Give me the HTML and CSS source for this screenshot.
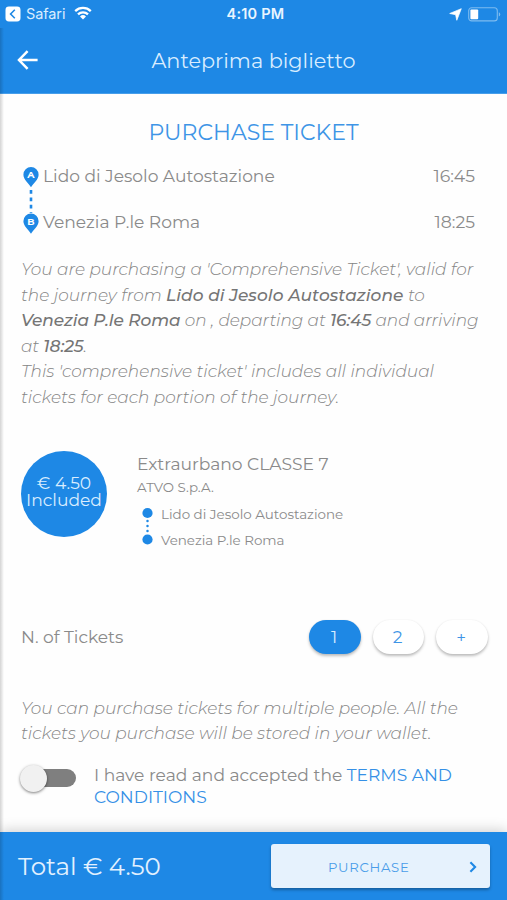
FILE: index.html
```html
<!DOCTYPE html>
<html lang="en">
<head>
<meta charset="utf-8">
<title>Anteprima biglietto</title>
<link rel="stylesheet" href="styles.css">
</head>
<body>
<div class="screen">
  <header class="header">
    <div class="status">
      <div class="status-left">
        <svg width="16" height="16" viewBox="0 0 16 16"><rect x=".5" y=".5" width="15" height="15" rx="3.4" fill="#fff"/><path d="M9.8 3.8 5.600 8l4.200 4.200" fill="none" stroke="#1e88e5" stroke-width="1.600"/></svg>
        <span class="safari">Safari</span>
        <svg class="wifi" width="18" height="14" viewBox="0 0 18 14"><g fill="none" stroke="#fff" stroke-width="2.300"><path d="M1.200 5.100a11.200 11.200 0 0 1 15.600 0"/><path d="M4 8.300a7.200 7.200 0 0 1 10 0"/></g><path d="M9 13.400 6 10.500a4.300 4.300 0 0 1 6 0z" fill="#fff"/></svg>
      </div>
      <span class="clock">4:10 PM</span>
      <div class="status-right">
        <svg width="13" height="13" viewBox="0 0 13 13"><path d="M12.300.7 7.800 12.300 6.600 6.700.7 5.500z" fill="#fff" stroke="#fff" stroke-width=".7" stroke-linejoin="round"/></svg>
        <svg class="battery" width="33" height="15" viewBox="0 0 33 15"><rect x=".7" y=".7" width="28.600" height="13.200" rx="3" fill="none" stroke="#7dbbf0" stroke-width="1.100"/><rect x="2.400" y="2.600" width="7.800" height="9.600" rx="1" fill="#fff"/><path d="M30.800 5.200a2.400 2.400 0 0 1 0 4.400z" fill="#7dbbf0"/></svg>
      </div>
    </div>
    <div class="navbar">
      <svg class="back" width="22" height="20" viewBox="0 0 22 20"><path d="M10.600 1.200 2 10l8.600 8.800M2 10h18.600" fill="none" stroke="#fff" stroke-width="2.500"/></svg>
      <h1 class="nav-title">Anteprima biglietto</h1>
    </div>
  </header>

  <main class="content">
    <h2 class="heading">PURCHASE TICKET</h2>

    <section class="route">
      <svg class="route-line" width="16" height="67" viewBox="0 0 16 67">
        <path d="M8 23v23" stroke="#1e88e5" stroke-width="2.600" stroke-dasharray="3.800 3.600"/>
        <path d="M8 20.200C6 16.700.4 12.500.4 7.700a7.600 7.600 0 0 1 15.200 0C15.600 12.500 10 16.700 8 20.200z" fill="#1e88e5"/>
        <path d="M8 66.700C6 63.200.4 59 .4 54.200a7.600 7.600 0 0 1 15.200 0C15.600 59 10 63.200 8 66.700z" fill="#1e88e5"/>
        <text class="pin" x="8" y="11.200">A</text>
        <text class="pin" x="8" y="57.700">B</text>
      </svg>
      <div class="stops">
        <div class="stop"><span>Lido di Jesolo Autostazione</span><span class="time">16:45</span></div>
        <div class="stop"><span>Venezia P.le Roma</span><span class="time">18:25</span></div>
      </div>
    </section>

    <p class="note">
      You are purchasing a 'Comprehensive Ticket', valid for<br>
      the journey from <b class="wide">Lido di Jesolo Autostazione</b> to<br>
      <span class="tight"><b>Venezia P.le Roma</b> on , departing at <b>16:45</b> and arriving</span><br>
      <span class="tight">at <b>18:25</b>.</span><br>
      This 'comprehensive ticket' includes all individual<br>
      tickets for each portion of the journey.
    </p>

    <section class="fare">
      <div class="price"><span>€ 4.50</span><span>Included</span></div>
      <div class="fare-info">
        <div class="fare-name">Extraurbano CLASSE 7</div>
        <div class="company">ATVO S.p.A.</div>
        <div class="legs">
          <svg width="12" height="38" viewBox="0 0 12 38"><circle cx="5.500" cy="6" r="5.100" fill="#1e88e5"/><circle cx="5.500" cy="32.500" r="5.100" fill="#1e88e5"/><path d="M5.500 13.900v12" stroke="#1e88e5" stroke-width="2.500" stroke-linecap="round" stroke-dasharray="0 5"/></svg>
          <div><div class="leg">Lido di Jesolo Autostazione</div><div class="leg">Venezia P.le Roma</div></div>
        </div>
      </div>
    </section>

    <section class="quantity">
      <span>N. of Tickets</span>
      <div class="pills"><span class="pill active">1</span><span class="pill">2</span><span class="pill">+</span></div>
    </section>

    <p class="note wallet">
      You can purchase tickets for multiple people. All the<br>
      tickets you purchase will be stored in your wallet.
    </p>

    <section class="terms">
      <div class="toggle"><div class="knob"></div></div>
      <p class="terms-text">I have read and accepted the <span class="link">TERMS AND<br>CONDITIONS</span></p>
    </section>
  </main>

  <footer class="footer">
    <span class="total">Total € 4.50</span>
    <div class="buy"><span class="buy-label">PURCHASE</span><svg width="8" height="12" viewBox="0 0 8 12"><path d="M1.400 1.300 6.100 6l-4.700 4.700" fill="none" stroke="#1e88e5" stroke-width="2.100"/></svg></div>
  </footer>
  <div class="edge"></div>
</div>
</body>
</html>
```
FILE: styles.css
```css
* { box-sizing: border-box; }
body { margin: 0; background: #fff; font-family: "Montserrat", "Inter", sans-serif; font-size: 17.100px; color: #8a8a8a; }
svg { display: block; flex: none; }
h1, h2, p { margin: 0; }
.screen { position: relative; width: 507px; height: 900px; overflow: hidden; display: flex; flex-direction: column; white-space: nowrap; background: #fefefe; }

.header { height: 94px; background: #1e88e5; color: #fff; flex: none; border-bottom: 1px solid #479eea; }
.status { height: 28px; padding: 0 6px 0 5px; display: grid; grid-template-columns: 1fr auto 1fr; align-items: center; font-family: "Inter", sans-serif; font-size: 14.500px; line-height: 28px; }
.status-left, .status-right { display: flex; align-items: center; }
.status-right { justify-content: flex-end; }
.safari { margin-left: 5px; width: 39px; color: #d9edff; letter-spacing: -.1px; }
.wifi { margin-left: 9px; margin-top: -2px; }
.clock { font-weight: 600; color: #e9f5ff; letter-spacing: .2px; padding-left: 5px; }
.battery { margin-left: 6px; }
.navbar { height: 64px; padding: 0 0 0 17px; display: flex; align-items: center; }
.nav-title { flex: 1; padding-right: 39px; text-align: center; font-size: 20.800px; font-weight: 400; color: #d9edff; }

.content { flex: 1; padding: 24px 18px 0 21px; display: flex; flex-direction: column; }
.heading { height: 30px; text-align: center; font-size: 22px; line-height: 30px; font-weight: 400; color: #3e95e6; padding-right: 3px; }

.route { margin-top: 18px; height: 68px; display: flex; padding: 1px 14px 0 2px; }
.pin { font: 700 9.500px "Montserrat", sans-serif; fill: #fff; text-anchor: middle; }
.stops { flex: 1; margin: -3px 0 0 4px; }
.stop { height: 46px; line-height: 24px; display: flex; justify-content: space-between; }
.time { font-size: 17.300px; }

.note { margin-top: 23px; font-size: 16.950px; line-height: 25.600px; font-style: italic; font-weight: 300; color: #858585; }
.note b { font-weight: 500; color: #757575; }
.note .wide { letter-spacing: .1px; }
.tight { letter-spacing: -.07px; }

.fare { margin-top: 40px; height: 100px; display: flex; }
.price { width: 86px; height: 86px; border-radius: 50%; background: #1e88e5; color: #d9edff; display: flex; flex-direction: column; align-items: center; justify-content: center; line-height: 17.500px; padding-bottom: 5px; }
.fare-info { margin-left: 30px; }
.fare-name { line-height: 26px; }
.company { font-size: 13.400px; line-height: 20px; }
.legs { display: flex; gap: 7px; margin: 10px 0 0 5px; }
.leg { height: 26.500px; line-height: 17px; margin-top: -1px; margin-bottom: 1px; font-size: 13.450px; }

.quantity { margin-top: 69px; height: 34px; display: flex; align-items: center; justify-content: space-between; }
.pills { display: flex; gap: 12px; margin-right: 1px; }
.pill { width: 51.600px; height: 34px; border-radius: 17px; text-align: center; line-height: 34px; padding-right: 2px; color: #3e95e6; background: #fff; box-shadow: 0 2px 3px rgba(0,0,0,.26), 0 0 2px rgba(0,0,0,.05); }
.active { background: #1e88e5; color: #d9edff; }

.wallet { margin-top: 42px; }

.terms { margin-top: 16px; display: flex; }
.toggle { flex: none; width: 55px; height: 18px; margin-top: 6px; border-radius: 9px; background: #7f7f7f; }
.knob { width: 27px; height: 27px; margin: -4px 0 0 -1px; border-radius: 50%; background: #f1f1f1; box-shadow: 0 1px 3px rgba(0,0,0,.5); }
.terms-text { margin-left: 18px; margin-top: 1px; line-height: 22px; }
.link { color: #3590e6; }

.footer { height: 68px; flex: none; background: #1e88e5; box-shadow: 0 -2px 12px rgba(0,0,0,.18); padding: 0 17px 0 18px; display: flex; align-items: center; justify-content: space-between; }
.total { font-size: 24.500px; color: #e2f1ff; }
.buy { width: 219px; height: 44px; border-radius: 3px; background: #e6f2fd; box-shadow: 0 2px 3px rgba(0,0,0,.3); padding: 1px 13px 0 57px; display: flex; align-items: center; justify-content: space-between; }
.buy-label { font-size: 13.200px; letter-spacing: .7px; color: #4a9de9; }
.edge { position: absolute; left: 0; top: 28px; bottom: 0; width: 4px; background: linear-gradient(to right, rgba(0,0,0,.17), rgba(0,0,0,0)); }
```
